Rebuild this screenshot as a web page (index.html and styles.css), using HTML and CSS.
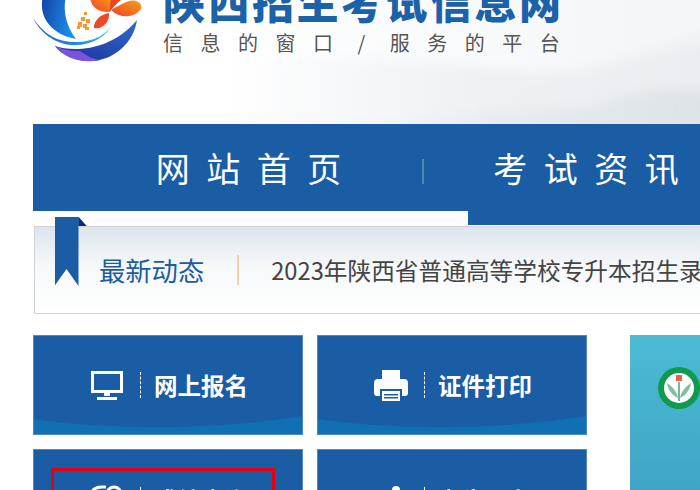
FILE: index.html
```html
<!DOCTYPE html>
<html lang="zh-CN">
<head>
    <meta charset="UTF-8">
    <title>陕西招生考试信息网</title>
    <link rel="stylesheet" href="styles.css">
</head>
<body>
    <div class="header">
        <svg class="mist" width="700" height="124" viewBox="0 0 700 124">
            <defs>
                <filter id="mistBlur" x="-20%" y="-40%" width="140%" height="180%">
                    <feGaussianBlur stdDeviation="6"/>
                </filter>
                <linearGradient id="mistFade" x1="0" x2="1" y1="0" y2="0">
                    <stop offset="0" stop-color="#e3e9ee" stop-opacity="0"/>
                    <stop offset="0.5" stop-color="#e3e9ee" stop-opacity="0.5"/>
                    <stop offset="1" stop-color="#e3e9ee" stop-opacity="0.5"/>
                </linearGradient>
                <linearGradient id="hillFade" x1="0" x2="1" y1="0" y2="0">
                    <stop offset="0" stop-color="#dde3e7" stop-opacity="0"/>
                    <stop offset="0.6" stop-color="#dde3e7" stop-opacity="0.6"/>
                    <stop offset="1" stop-color="#dde3e7"/>
                </linearGradient>
            </defs>
            <path d="M240 60 C340 54 430 60 520 72 C590 80 640 48 720 36 V130 H240 Z" fill="url(#mistFade)" filter="url(#mistBlur)"/>
            <path d="M370 124 C450 112 540 112 600 106 C630 92 660 86 720 90 V130 H370 Z" fill="url(#hillFade)" filter="url(#mistBlur)"/>
        </svg>
        <svg class="logo" width="110" height="62" viewBox="33 0 110 62">
            <defs>
                <linearGradient id="crescent" x1="0" x2="1" y1="0" y2="0.3">
                    <stop offset="0" stop-color="#1342a8"/>
                    <stop offset="1" stop-color="#1a8fe6"/>
                </linearGradient>
                <linearGradient id="swoosh" x1="0" x2="1" y1="0" y2="0">
                    <stop offset="0" stop-color="#2a62b8"/>
                    <stop offset="0.6" stop-color="#1d8fe0"/>
                    <stop offset="1" stop-color="#33c2ee"/>
                </linearGradient>
                <linearGradient id="wave" x1="0" x2="1" y1="1" y2="0">
                    <stop offset="0" stop-color="#1c2f96"/>
                    <stop offset="1" stop-color="#2f6ad0"/>
                </linearGradient>
                <linearGradient id="petal" x1="0" x2="1" y1="1" y2="0">
                    <stop offset="0" stop-color="#ee3f28"/>
                    <stop offset="1" stop-color="#f9a11b"/>
                </linearGradient>
            </defs>
            <path d="M43 -4 C38 16 50 34 76 39 C68 28 62 14 66 -4 Z" fill="url(#crescent)"/>
            <path d="M33 18 C44 34 56 42 76 42 C94 42 108 34 113 23 C106 38 90 46 72 45 C54 44 40 32 33 18 Z" fill="url(#swoosh)"/>
            <path d="M55 46 C72 52 110 52 137 20 C134 42 114 61 90 61 C76 61 62 55 55 46 Z" fill="url(#wave)"/>
            <path d="M55 46 C62 49 70 51 80 51 C86 55 92 59 100 60 C82 64 64 58 55 46 Z" fill="#7b52dc"/>
            <path d="M90 -4 C90 6 98 13 110 12 C113 6 113 0 110 -4 Z" fill="url(#petal)"/>
            <path d="M110 11 C116 4 122 -2 128 -4 H112 C110 2 110 6 110 11 Z" fill="#ea4528"/>
            <path d="M111 10 C120 19 134 18 141 9 C143 3 136 -1 129 1 C123 3 116 7 111 10 Z" fill="url(#petal)"/>
            <path d="M109 13 C100 14 93 22 94 28 C102 30 110 22 109 13 Z" fill="#ee4a28"/>
            <path d="M84 12h3v3h-3zM81 17h4v4h-4zM86 19h4v4h-4zM78 22h4v5h-4zM83 24h4v4h-4zM77 26h3v3h-3zM85 27h4v3h-4z" fill="#f59a2e"/>
        </svg>
        <div class="brand">
            <div class="brand-name">陕西招生考试信息网</div>
            <div class="brand-slogan">信息的窗口 / 服务的平台</div>
        </div>
    </div>

    <div class="nav">
        <div class="nav-item nav-active"><span>网站首页</span><i class="nav-sep"></i></div>
        <div class="nav-item"><span>考试资讯</span></div>
    </div>

    <div class="notice">
        <div class="ribbon"></div>
        <div class="notice-label">最新动态</div>
        <div class="notice-sep"></div>
        <div class="notice-text">2023年陕西省普通高等学校专升本招生录取工作通知</div>
    </div>

    <div class="main">
        <div class="cards">
            <div class="card">
                <div class="card-body">
                    <svg class="card-icon" width="34" height="30" viewBox="0 0 34 30">
                        <path d="M1 1h32v22H1z M4 4v16h26V4z" fill="#fff" fill-rule="evenodd"/>
                        <path d="M14 23h6v3h-6z" fill="#fff"/>
                        <path d="M7 27h20v3H7z" fill="#fff"/>
                    </svg>
                    <i class="card-sep"></i>
                    <span>网上报名</span>
                </div>
                <svg class="wave" viewBox="0 0 270 18" preserveAspectRatio="none"><path d="M0 3 C70 14 190 14 270 0 V18 H0 Z" fill="#116fb3"/></svg>
            </div>
            <div class="card">
                <div class="card-body">
                    <svg class="card-icon" width="34" height="32" viewBox="0 0 34 32">
                        <path d="M8 1h18v9H8z" fill="#fff"/>
                        <path d="M4 10h26a4 4 0 0 1 4 4v10a3 3 0 0 1-3 3h-3v-7H6v7H3a3 3 0 0 1-3-3V14a4 4 0 0 1 4-4z" fill="#fff"/>
                        <path d="M8 22h18v10H8z" fill="#fff"/>
                        <path d="M10 25h14v1.5H10zM10 28h14v1.5H10z" fill="#1a5da5"/>
                    </svg>
                    <i class="card-sep"></i>
                    <span>证件打印</span>
                </div>
                <svg class="wave" viewBox="0 0 270 18" preserveAspectRatio="none"><path d="M0 3 C70 14 190 14 270 0 V18 H0 Z" fill="#116fb3"/></svg>
            </div>
            <div class="card card-low">
                <div class="card-body">
                    <svg class="card-icon" width="34" height="30" viewBox="0 0 34 30">
                        <path d="M1 12 C1 5 5 2 12 2 H16" fill="none" stroke="#fff" stroke-width="3"/>
                        <circle cx="24" cy="9" r="7" fill="none" stroke="#fff" stroke-width="3"/>
                    </svg>
                    <i class="card-sep"></i>
                    <span>成绩查询</span>
                </div>
                <div class="focus-box"></div>
            </div>
            <div class="card card-low">
                <div class="card-body">
                    <svg class="card-icon" width="34" height="30" viewBox="0 0 34 30">
                        <circle cx="22" cy="5" r="4" fill="#fff"/>
                        <path d="M22 2 L34 14 V30 H8 V14 Z" fill="#fff"/>
                    </svg>
                    <i class="card-sep"></i>
                    <span>考生服务</span>
                </div>
            </div>
        </div>
        <div class="side-banner">
            <svg class="seal" width="42" height="42" viewBox="0 0 42 42">
                <circle cx="21" cy="21" r="21" fill="#109a4e"/>
                <circle cx="21" cy="21" r="15" fill="#fff"/>
                <rect x="18" y="8" width="6" height="6" fill="#e8604c"/>
                <path d="M20 31 C19 25 15 20 9 16 C10 23 14 28 20 31 Z" fill="#7cc09c"/>
                <path d="M22 31 C23 25 27 20 33 16 C32 23 28 28 22 31 Z" fill="#7cc09c"/>
                <path d="M20.3 15h1.4v19h-1.4z" fill="#3c9a68"/>
            </svg>
        </div>
    </div>
</body>
</html>
```

FILE: styles.css
```css
* {
    box-sizing: border-box;
}

html, body {
    margin: 0;
    padding: 0;
    height: 490px;
    overflow: hidden;
    background-color: #fff;
}

body {
    font-family: "Noto Sans CJK SC", "Liberation Sans", sans-serif;
    width: 700px;
}

.header {
    position: relative;
    height: 124px;
    display: flex;
    align-items: flex-start;
    padding-left: 33px;
    overflow: hidden;
    background: linear-gradient(90deg, #fff 30%, #f3f5f8 100%);
}

.mist {
    position: absolute;
    left: 0;
    top: 0;
}

.logo {
    position: relative;
    flex: none;
}

.brand {
    position: relative;
    margin-left: 20px;
    margin-top: -27px;
}

.brand-name {
    font-size: 42px;
    line-height: 56px;
    font-weight: 900;
    letter-spacing: 2.5px;
    color: #1b62a8;
    white-space: nowrap;
}

.brand-slogan {
    font-size: 20px;
    line-height: 28px;
    letter-spacing: 17.5px;
    word-spacing: -15px;
    color: #555;
    white-space: nowrap;
}

/* nav */
.nav {
    display: flex;
    width: 900px;
    margin-left: 33px;
    height: 101px;
    background-color: #1a5da5;
}

.nav-item {
    position: relative;
    flex: none;
    width: 236px;
    height: 87px;
    display: flex;
    align-items: center;
    justify-content: center;
    font-size: 34px;
    letter-spacing: 16.5px;
    color: #fff;
    white-space: nowrap;
}

.nav-item span {
    margin-right: -16.5px;
}

.nav-active {
    width: 435px;
    height: 101px;
    padding-bottom: 14px;
    padding-right: 4px;
    background: linear-gradient(#1a5da5 87px, #fff 87px);
}

.nav-sep {
    position: absolute;
    right: 44px;
    top: 35px;
    width: 2px;
    height: 25px;
    background-color: #4d85b5;
}

/* notice */
.notice {
    position: relative;
    width: 720px;
    height: 88px;
    margin-top: 1px;
    margin-left: 34px;
    display: flex;
    align-items: center;
    padding: 0 0 0 64px;
    border: 1.5px solid #d4d4d4;
    background: linear-gradient(#dce6ee 0%, #f6f8fa 45%, #fff 100%);
    white-space: nowrap;
}

.ribbon {
    position: absolute;
    left: 19.5px;
    top: -10px;
    width: 32px;
    height: 69px;
    background-color: #1a5da5;
    clip-path: polygon(0 0, 24px 0, 32px 9px, 24px 9px, 24px 100%, 12px 52px, 0 100%);
}

.ribbon::after {
    content: "";
    position: absolute;
    left: 24px;
    top: 0;
    width: 8px;
    height: 9px;
    background-color: #14267c;
}

.notice-label {
    font-size: 26.3px;
    line-height: 30px;
    color: #1a5da5;
}

.notice-sep {
    flex: none;
    width: 2px;
    height: 30px;
    margin: 0 32.5px;
    background-color: #f5cfa8;
}

.notice-text {
    font-size: 23.7px;
    line-height: 30px;
    color: #444;
}

/* cards */
.main {
    display: flex;
    margin: 21px 0 0 33px;
}

.cards {
    display: grid;
    grid-template-columns: 270px 270px;
    grid-auto-rows: 100px;
    gap: 14px;
    flex: none;
}

.card {
    position: relative;
    border: 1px solid #4f88bd;
    background-color: #1a5da5;
    color: #fff;
}

.card-body {
    position: relative;
    display: flex;
    align-items: center;
    height: 100%;
    padding: 0 0 0 56px;
    font-size: 23.5px;
    font-weight: 700;
    z-index: 1;
}

.card-low .card-body {
    padding-top: 2px;
}

.card-icon {
    flex: none;
}

.card-sep {
    flex: none;
    height: 26px;
    margin: 0 13px 0 16px;
    border-left: 1.5px dashed #fff;
}

.wave {
    position: absolute;
    left: 0;
    right: 0;
    bottom: 0;
    width: 100%;
    height: 18px;
}

.focus-box {
    position: absolute;
    left: 17px;
    top: 18px;
    width: 224px;
    height: 80px;
    border: 3px solid #e60012;
    z-index: 2;
}

.side-banner {
    flex: none;
    width: 200px;
    height: 200px;
    margin-left: 43px;
    padding: 32px 0 0 28px;
    background: linear-gradient(#4bbcd3, #3d9dc3);
}

.seal {
    display: block;
}
```
